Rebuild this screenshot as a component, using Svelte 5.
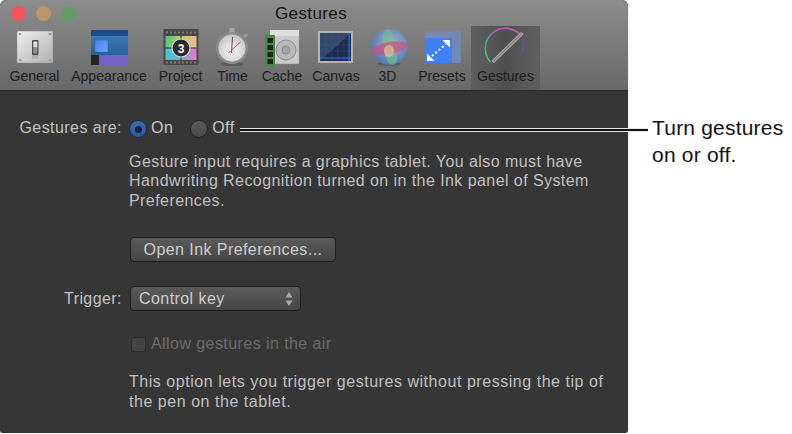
<script lang="ts">
	const tools = [
		{ id: 'general', label: 'General', w: 65 },
		{ id: 'appearance', label: 'Appearance', w: 84 },
		{ id: 'project', label: 'Project', w: 59 },
		{ id: 'time', label: 'Time', w: 45 },
		{ id: 'cache', label: 'Cache', w: 54 },
		{ id: 'canvas', label: 'Canvas', w: 54 },
		{ id: 'threeD', label: '3D', w: 49 },
		{ id: 'presets', label: 'Presets', w: 60 },
		{ id: 'gestures', label: 'Gestures', w: 67 }
	];
</script>

<div class="page">
	<div class="window">
		<header class="toolbar">
			<div class="titlebar">
				<div class="lights">
					<span class="light red"></span>
					<span class="light amber"></span>
					<span class="light green"></span>
				</div>
				<div class="title">Gestures</div>
			</div>
			<nav class="tools">
				{#each tools as t}
					<div class="tool" class:active={t.id === 'gestures'} style="width:{t.w}px">
						<svg class="icon" width="44" height="40" viewBox="0 0 44 40">
							{#if t.id === 'general'}
								<defs>
									<linearGradient id="gen" x1="0" y1="0" x2="1" y2="1"><stop offset="0" stop-color="#f0f0f0" /><stop offset="1" stop-color="#b0b0b0" /></linearGradient>
									<linearGradient id="genS" x1="0" y1="0" x2="0" y2="1"><stop offset="0" stop-color="#777" stop-opacity=".6" /><stop offset="1" stop-color="#777" stop-opacity="0" /></linearGradient>
								</defs>
								<rect x="4" y="4" width="36" height="32" rx="1" fill="url(#gen)" stroke="#8a8a8a" stroke-width=".5" />
								<circle cx="7" cy="7" r="1.3" fill="#999" /><circle cx="37" cy="7" r="1.3" fill="#999" />
								<circle cx="7" cy="33" r="1.3" fill="#999" /><circle cx="37" cy="33" r="1.3" fill="#999" />
								<rect x="19" y="26" width="6" height="7" fill="url(#genS)" />
								<rect x="19" y="13" width="6.5" height="15" rx="1" fill="#4a4a4a" />
								<rect x="20.2" y="14.5" width="4.2" height="6" fill="#dcdcdc" />
								<rect x="20.2" y="20.5" width="4.2" height="6" fill="#8c8c8c" />
							{:else if t.id === 'appearance'}
								<defs>
									<linearGradient id="appB" x1="0" y1="0" x2="0" y2="1"><stop offset="0" stop-color="#3a79b8" /><stop offset="1" stop-color="#2b5f9c" /></linearGradient>
									<linearGradient id="appS" x1="0" y1="0" x2="1" y2="1"><stop offset="0" stop-color="#4a80e8" /><stop offset="1" stop-color="#6ea4fa" /></linearGradient>
								</defs>
								<rect x="4" y="3" width="37" height="35" fill="#444" />
								<rect x="4" y="3" width="37" height="7" fill="#1d4c86" />
								<rect x="4" y="9" width="37" height="19" fill="url(#appB)" />
								<rect x="8" y="13" width="13" height="12" fill="url(#appS)" stroke="#2f6ab0" stroke-width=".5" />
								<rect x="4" y="28" width="8" height="10" fill="#252525" />
								<rect x="12" y="28" width="29" height="10" fill="#7561c4" />
							{:else if t.id === 'project'}
								<defs>
									<linearGradient id="prA" x1="0" y1="0" x2="1" y2="0"><stop offset="0" stop-color="#52c67a" /><stop offset=".5" stop-color="#b8d070" /><stop offset="1" stop-color="#f0b890" /></linearGradient>
									<linearGradient id="prB" x1="0" y1="0" x2="1" y2="0"><stop offset="0" stop-color="#40c8c8" /><stop offset=".5" stop-color="#70a8e8" /><stop offset="1" stop-color="#f078c0" /></linearGradient>
								</defs>
								<rect x="4.5" y="2" width="35" height="36" rx="1" fill="#484848" />
								<path d="M7 5.5H37M7 35.5H37" stroke="#7a7a7a" stroke-width="2" stroke-dasharray="2 2" />
								<rect x="6.5" y="9" width="31" height="12" fill="url(#prA)" />
								<rect x="6.5" y="21" width="31" height="12" fill="url(#prB)" />
								<path d="M6.5 21H37.5M22 9V33" stroke="#333" stroke-width="1" />
								<circle cx="22" cy="21" r="9" fill="#2a2a2a" stroke="#d8d8d8" stroke-width="1.2" />
								<text x="22" y="25.5" class="num">3</text>
							{:else if t.id === 'time'}
								<defs>
									<radialGradient id="tmF" cx=".5" cy=".6" r=".6"><stop offset="0" stop-color="#fafafa" /><stop offset="1" stop-color="#c4c4c4" /></radialGradient>
								</defs>
								<ellipse cx="21" cy="37" rx="12" ry="2" fill="#444" opacity=".5" />
								<rect x="18.5" y="1" width="5" height="5" rx="1" fill="#a8a8a8" />
								<path d="M33 10l3-3" stroke="#999" stroke-width="3" />
								<circle cx="21" cy="21" r="16" fill="#8d8d8d" />
								<circle cx="21" cy="21" r="13.5" fill="url(#tmF)" />
								<path d="M21.5 10L20.5 26" stroke="#555" stroke-width="1" />
								<path d="M17.5 26L29.5 15" stroke="#c84848" stroke-width="1" />
							{:else if t.id === 'cache'}
								<rect x="10" y="3" width="29" height="34" rx="1" fill="#c9c9c9" stroke="#8f8f8f" stroke-width=".5" />
								<rect x="10" y="3" width="29" height="6" fill="#dedede" />
								<circle cx="26" cy="23" r="10" fill="#b8b8b8" stroke="#8c8c8c" />
								<circle cx="26" cy="23" r="4" fill="#a4a4a4" stroke="#8c8c8c" />
								<rect x="5" y="8" width="10" height="31" fill="#3f8c3f" />
								<rect x="7.5" y="11" width="5.5" height="5" fill="#222" />
								<rect x="7.5" y="18" width="5.5" height="5" fill="#222" />
								<rect x="7.5" y="25" width="5.5" height="5" fill="#222" />
								<rect x="7.5" y="32" width="5.5" height="5" fill="#222" />
							{:else if t.id === 'canvas'}
								<rect x="4" y="4" width="35" height="32" fill="#b4b4b4" />
								<rect x="6" y="6" width="31" height="28" fill="#1b2c50" />
								<path d="M6 6H37L6 34Z" fill="#33486a" />
								<path d="M12 6V34M18 6V34M24 6V34M30 6V34M6 12H37M6 18H37M6 24H37" stroke="#56688a" stroke-width=".4" opacity=".6" />
								<path d="M6 31H37M35 6V34" stroke="#2f73dc" stroke-width="1.2" />
							{:else if t.id === 'threeD'}
								<defs>
									<radialGradient id="ball" cx=".55" cy=".4" r=".65"><stop offset="0" stop-color="#a8b4d0" /><stop offset="1" stop-color="#4f70b4" /></radialGradient>
								</defs>
								<ellipse cx="23" cy="37" rx="12" ry="2" fill="#444" opacity=".5" />
								<circle cx="23.5" cy="20" r="18" fill="url(#ball)" />
								<ellipse cx="24" cy="20" rx="7" ry="18" fill="#70c090" opacity=".65" transform="rotate(-10 24 20)" />
								<ellipse cx="23.5" cy="21" rx="18" ry="6" fill="#d04c78" opacity=".65" transform="rotate(-10 23.5 21)" />
								<ellipse cx="23" cy="24" rx="5" ry="6" fill="#e0c4a0" opacity=".7" />
							{:else if t.id === 'presets'}
								<rect x="5" y="4" width="36" height="32" fill="#7488b2" />
								<rect x="5" y="11" width="27" height="25" fill="#3f80f4" />
								<path d="M12 29L26 17" stroke="#fff" stroke-width="2" stroke-dasharray="2 2.4" />
								<path d="M7 34V26.5L14.5 34ZM30 13V20.5L22.5 13Z" fill="#fff" />
							{:else}
								<defs>
									<linearGradient id="arc" x1="0" y1="1" x2="1" y2="0"><stop offset="0" stop-color="#30e070" /><stop offset=".35" stop-color="#30b8a0" /><stop offset=".6" stop-color="#d050b8" /><stop offset="1" stop-color="#d060c0" /></linearGradient>
								</defs>
								<path d="M6.5 35A17 17 0 0 1 36.5 8" fill="none" stroke="url(#arc)" stroke-width="1.5" />
								<path d="M39 12A17 17 0 0 1 36 28" fill="none" stroke="#6258c0" stroke-width="1.5" opacity=".7" />
								<path d="M8.5 35L38.5 6" stroke="#a4a4a4" stroke-width="3.5" />
								<path d="M9 34.5L38 6.5" stroke="#5a5a5a" stroke-width=".7" />
							{/if}
						</svg>
						<span class="label">{t.label}</span>
					</div>
				{/each}
			</nav>
		</header>

		<main class="panel">
			<div class="row gestures-row">
				<span class="row-label">Gestures are:</span>
				<span class="radio on"><span class="dot"></span></span>
				<span class="opt">On</span>
				<span class="radio off"></span>
				<span class="opt">Off</span>
			</div>
			<p class="help first">
				Gesture input requires a graphics tablet. You also must have<br />
				Handwriting Recognition turned on in the Ink panel of System<br />
				Preferences.
			</p>
			<button class="btn">Open Ink Preferences...</button>
			<div class="row trigger-row">
				<span class="row-label">Trigger:</span>
				<div class="select">
					<span>Control key</span>
					<svg width="8" height="14" viewBox="0 0 8 14"><path d="M4 0L7.5 5.5H.5zM4 14L.5 8.5h7z" fill="#aaa" /></svg>
				</div>
			</div>
			<div class="row check-row">
				<span class="check"></span>
				<span class="disabled">Allow gestures in the air</span>
			</div>
			<p class="help last">
				This option lets you trigger gestures without pressing the tip of<br />
				the pen on the tablet.
			</p>
		</main>
	</div>

	<div class="callout">
		<span class="leader"></span>
		<span class="note">Turn gestures<br />on or off.</span>
	</div>
</div>

<style>
	:global(body) {
		margin: 0;
		background: #fff;
	}

	.page {
		position: relative;
		width: 792px;
		height: 434px;
		overflow: hidden;
		font-family: 'Liberation Sans', Arial, sans-serif;
	}

	.window {
		width: 628px;
		height: 433px;
		border-radius: 6px 6px 3px 3px;
		overflow: hidden;
		background: #363636;
		box-shadow: 0 0 1px #999;
		display: flex;
		flex-direction: column;
	}

	.toolbar {
		height: 91px;
		flex-shrink: 0;
		background: linear-gradient(#8d8d8d, #686868);
		border-bottom: 1px solid #2a2a2a;
		box-sizing: border-box;
	}

	.titlebar {
		position: relative;
		height: 26px;
		text-align: center;
	}

	.title {
		font-size: 17px;
		letter-spacing: 0.4px;
		line-height: 28px;
		padding-right: 6px;
		color: #111;
	}

	.lights {
		position: absolute;
		left: 11px;
		top: 6px;
		display: flex;
		gap: 10px;
	}

	.light {
		width: 15px;
		height: 15px;
		border-radius: 50%;
	}

	.red {
		background: #f4545a;
	}

	.amber {
		background: #b9976a;
	}

	.green {
		background: #5f9c66;
	}

	.tools {
		display: flex;
		padding-left: 2px;
		height: 64px;
	}

	.tool {
		display: flex;
		flex-direction: column;
		align-items: center;
		flex-shrink: 0;
		height: 64px;
	}

	.tool.active {
		background: linear-gradient(90deg, #5f5f5f, #4f4f4f 50%, #5f5f5f);
		box-shadow: -1px 0 0 #5c5c5c, 1px 0 0 #5c5c5c;
	}

	.icon {
		flex-shrink: 0;
		margin-top: 1px;
	}

	.num {
		font-size: 12px;
		font-weight: bold;
		fill: #fff;
		text-anchor: middle;
	}

	.label {
		font-size: 14px;
		line-height: 18px;
		color: #1d1d1d;
		white-space: nowrap;
	}

	.panel {
		flex: 1;
		padding-top: 27px;
		color: #c8c8c8;
		font-size: 16px;
		letter-spacing: 0.43px;
	}

	.row {
		display: flex;
		align-items: center;
	}

	.gestures-row {
		height: 20px;
	}

	.row-label {
		width: 122px;
		flex-shrink: 0;
		text-align: right;
		white-space: nowrap;
		color: #c4c4c4;
	}

	.radio {
		width: 18px;
		height: 18px;
		border-radius: 50%;
		box-sizing: border-box;
		display: flex;
		align-items: center;
		justify-content: center;
		margin: 2px 0 0 7px;
		flex-shrink: 0;
	}

	.radio.on {
		background: linear-gradient(#3b6db4, #2a5a9f);
		border: 1px solid #1c2b44;
	}

	.radio.off {
		margin-left: 17px;
		background: linear-gradient(#5a5a5a, #484848);
		border: 1px solid #222;
	}

	.dot {
		width: 7px;
		height: 7px;
		border-radius: 50%;
		background: #10203f;
	}

	.opt {
		margin-left: 4px;
	}

	.help {
		margin: 0;
		line-height: 19.4px;
		color: #c0c0c0;
		white-space: nowrap;
	}

	.help.first {
		margin: 14px 0 0 129px;
	}

	.btn {
		display: block;
		margin: 27px 0 0 130px;
		width: 206px;
		height: 25px;
		padding: 0;
		border: 1px solid #1e1e1e;
		border-radius: 4px;
		background: linear-gradient(#5a5a5a, #464646);
		color: #cdcdcd;
		font: inherit;
		letter-spacing: inherit;
	}

	.trigger-row {
		margin-top: 24px;
	}

	.select {
		margin-left: 8px;
		width: 171px;
		height: 25px;
		box-sizing: border-box;
		border: 1px solid #1e1e1e;
		border-radius: 4px;
		background: linear-gradient(#5a5a5a, #464646);
		display: flex;
		align-items: center;
		justify-content: space-between;
		padding: 0 7px 0 8px;
		color: #cdcdcd;
	}

	.check-row {
		margin-top: 24px;
		padding-left: 131px;
		height: 18px;
	}

	.check {
		width: 15px;
		height: 15px;
		border-radius: 3px;
		border: 1px solid #2c2c2c;
		background: #444;
		box-sizing: border-box;
	}

	.disabled {
		margin-left: 5px;
		color: #6c6c6c;
	}

	.help.last {
		margin: 19px 0 0 129px;
		letter-spacing: 0.54px;
	}

	.callout {
		position: absolute;
		left: 240px;
		top: 114px;
		display: flex;
		align-items: flex-start;
	}

	.leader {
		display: block;
		width: 408px;
		height: 4px;
		margin-top: 14px;
		box-sizing: border-box;
		border-top: 1px solid #e8e8e8;
		border-bottom: 1px solid #e8e8e8;
		background: #111;
	}

	.note {
		margin-left: 4px;
		font-size: 21px;
		letter-spacing: 0.2px;
		line-height: 27px;
		color: #111;
		white-space: nowrap;
	}
</style>
